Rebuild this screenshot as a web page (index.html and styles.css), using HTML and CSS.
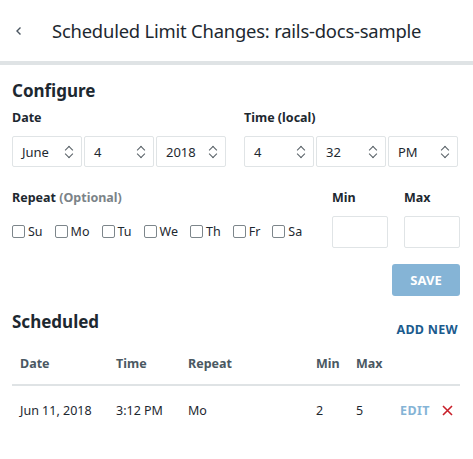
FILE: index.html
```html
<!DOCTYPE html>
<html>
<head>
<meta charset="utf-8">
<link rel="stylesheet" href="styles.css">
</head>
<body>
<header class="topbar">
  <span class="back"><svg width="8" height="10" viewBox="0 0 8 10"><path d="M5.5 1.5 L2 5 L5.5 8.5" fill="none" stroke="#4a5560" stroke-width="1.4"/></svg></span>
  <h1 class="title">Scheduled Limit Changes: rails-docs-sample</h1>
</header>
<main class="content">
  <h2 class="section-title">Configure</h2>
  <div class="row">
    <div class="group">
      <div class="label">Date</div>
      <div class="selects">
        <div class="select">June<span class="chev"></span></div>
        <div class="select">4<span class="chev"></span></div>
        <div class="select">2018<span class="chev"></span></div>
      </div>
    </div>
    <div class="group">
      <div class="label">Time (local)</div>
      <div class="selects">
        <div class="select">4<span class="chev"></span></div>
        <div class="select">32<span class="chev"></span></div>
        <div class="select">PM<span class="chev"></span></div>
      </div>
    </div>
  </div>
  <div class="row repeat-row">
    <div class="repeat">
      <div class="label">Repeat <span class="muted">(Optional)</span></div>
      <div class="days">
        <label class="day"><span class="box"></span>Su</label>
        <label class="day"><span class="box"></span>Mo</label>
        <label class="day"><span class="box"></span>Tu</label>
        <label class="day"><span class="box"></span>We</label>
        <label class="day"><span class="box"></span>Th</label>
        <label class="day"><span class="box"></span>Fr</label>
        <label class="day"><span class="box"></span>Sa</label>
      </div>
    </div>
    <div class="limits">
      <div class="limit">
        <div class="label">Min</div>
        <div class="input"></div>
      </div>
      <div class="limit">
        <div class="label">Max</div>
        <div class="input"></div>
      </div>
    </div>
  </div>
  <div class="actions"><button class="save">SAVE</button></div>
  <div class="sched-head">
    <h2 class="section-title">Scheduled</h2>
    <span class="add-new">ADD NEW</span>
  </div>
  <div class="table">
    <div class="trow thead">
      <span>Date</span><span>Time</span><span>Repeat</span><span>Min</span><span>Max</span><span></span>
    </div>
    <div class="trow tbody">
      <span>Jun 11, 2018</span><span>3:12 PM</span><span>Mo</span><span>2</span><span>5</span>
      <span class="row-actions"><span class="edit">EDIT</span><svg class="del" width="11" height="11" viewBox="0 0 11 11"><path d="M1 1 L10 10 M10 1 L1 10" stroke="#c8202a" stroke-width="1.6"/></svg></span>
    </div>
  </div>
</main>
</body>
</html>
```

FILE: styles.css
```css
* { box-sizing: border-box; }
body {
  margin: 0;
  font-family: "Noto Sans", "Open Sans", sans-serif;
  color: #1d2830;
  background: #fff;
}
.topbar {
  height: 65px;
  display: flex;
  align-items: center;
  border-bottom: 4px solid #dfe3e5;
  padding-left: 15px;
}
.back { width: 37px; display: flex; align-items: center; }
.title {
  margin: 0;
  font-size: 18.4px;
  font-weight: 400;
  color: #1d2830;
  letter-spacing: -0.2px;
}
.content { padding: 0 13px 0 12px; }
.section-title {
  margin: 0;
  font-size: 17px;
  font-weight: 700;
  line-height: 24px;
}
.content > .section-title { margin-top: 14px; }
.row { display: flex; gap: 17px; }
.group { width: 215px; }
.label {
  font-size: 12.5px;
  font-weight: 700;
  line-height: 18px;
  margin-top: 6px;
  margin-bottom: 9px;
}
.muted { color: #7b8388; }
.selects { display: flex; gap: 2px; }
.select {
  width: 70px;
  height: 31px;
  border: 1px solid #e0e4e6;
  border-radius: 2px;
  display: flex;
  align-items: center;
  justify-content: space-between;
  padding: 0 8px 0 9px;
  font-size: 13px;
  color: #1d2830;
}
.chev {
  width: 8px; height: 14px; position: relative;
}
.chev::before, .chev::after {
  content: "";
  position: absolute;
  left: 1px;
  width: 5px; height: 5px;
  border-left: 1.3px solid #555e64;
  border-top: 1.3px solid #555e64;
}
.chev::before { top: 2px; transform: rotate(45deg); }
.chev::after { bottom: 2px; transform: rotate(-135deg); }
.repeat-row { justify-content: space-between; margin-top: 16px; }
.days { display: flex; gap: 12px; margin-top: 16px; }
.day {
  display: flex; align-items: center; gap: 3px;
  font-size: 12.5px; color: #1d2830;
}
.box {
  width: 13px; height: 13px;
  border: 1px solid #7d868b;
  border-radius: 2px;
}
.limits { display: flex; gap: 16px; }
.limit { width: 56px; }
.input {
  width: 56px; height: 32px;
  border: 1px solid #e0e4e6;
  border-radius: 2px;
}
.actions { display: flex; justify-content: flex-end; margin-top: 16px; }
.save {
  width: 68px; height: 32px;
  background: #85b4d6;
  border: none;
  border-radius: 3px;
  color: #fff;
  font-family: inherit;
  font-size: 13px;
  font-weight: 700;
}
.sched-head {
  display: flex; justify-content: space-between; align-items: flex-end;
  margin-top: 14px;
}
.add-new {
  font-size: 12.5px; font-weight: 700; color: #1b5b8e;
  letter-spacing: 0.3px;
  margin-bottom: -4px;
  margin-right: 2px;
}
.table { margin-top: 14px; }
.trow {
  display: grid;
  grid-template-columns: 96px 72px 128px 40px 44px 1fr;
  padding-left: 8px;
  align-items: center;
  font-size: 12.5px;
}
.thead {
  font-weight: 700; color: #4a5862;
  height: 38px;
  border-bottom: 2px solid #dfe3e5;
  padding-bottom: 6px;
}
.tbody { height: 48px; color: #1d2830; }
.row-actions { display: flex; align-items: center; justify-content: space-between; padding-right: 7px; }
.edit { color: #85b4d6; font-weight: 700; letter-spacing: 0.4px; }
```
